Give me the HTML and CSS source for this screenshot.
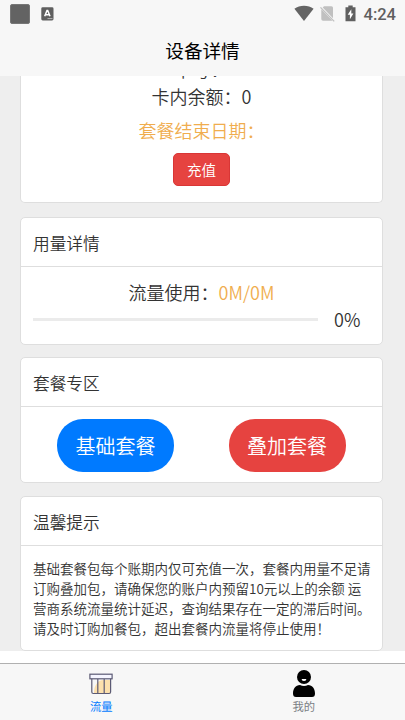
FILE: index.html
```
<!DOCTYPE html>
<html lang="zh-CN">
<head>
<meta charset="utf-8">
<title>设备详情</title>
<link rel="stylesheet" href="styles.css">
</head>
<body>
<header class="top">
  <div class="status">
    <span class="square"></span>
    <svg class="lang" width="13" height="14" viewBox="0 0 13 14"><rect x=".3" y=".3" width="12.2" height="13.2" rx="1.4" fill="#5f5f5f"/><path d="M3.7 9.3 6 3.5h.7L9 9.3M4.6 7.8h3.5" fill="none" stroke="#fff" stroke-width="1.5"/><path d="M6.5 11.6h5" stroke="#ccc" stroke-width=".8"/></svg>
    <svg class="wifi" width="20" height="17" viewBox="0 0 20 17"><path d="M.4 3.8C5.600-.2 14.400-.2 19.600 3.800L10 16Z" fill="#646464"/></svg>
    <svg class="sim" width="15" height="17" viewBox="0 0 15 17"><path d="M4 1.300h7.500q1.500 0 1.500 1.500v10.500L2.700 2.500ZM1.300 4.300 12.500 15.700H3q-1.700 0-1.700-1.700Z" fill="#c0c0c0"/><path d="m.5 2.400 13.700 14" stroke="#c0c0c0" stroke-width="1.300"/></svg>
    <svg class="battery" width="11" height="17" viewBox="0 0 11 17"><path d="M3.300.4h4.400v1.900H10.500v14H.5v-14h2.800Z" fill="#606060"/><path d="M6.300 4.300 2.700 9.800h2.200v4.400l3.500-5.700H6.300Z" fill="#fff"/></svg>
    <span class="clock">4:24</span>
  </div>
  <h1>设备详情</h1>
</header>
<main>
  <section class="card account">
    <p>卡号：</p>
    <p>卡内余额：0</p>
    <p class="expiry">套餐结束日期：</p>
    <button class="recharge">充值</button>
  </section>
  <section class="card usage">
    <h2>用量详情</h2>
    <p class="flow">流量使用：<span>0M/0M</span></p>
    <div class="progress"><div class="track"></div><span>0%</span></div>
  </section>
  <section class="card plans">
    <h2>套餐专区</h2>
    <div class="buttons"><button class="basic">基础套餐</button><button class="extra">叠加套餐</button></div>
  </section>
  <section class="card tips">
    <h2>温馨提示</h2>
    <p>基础套餐包每个账期内仅可充值一次，套餐内用量不足请<br>订购叠加包，请确保您的账户内预留10元以上的余额 运<br>营商系统流量统计延迟，查询结果存在一定的滞后时间。<br>请及时订购加餐包，超出套餐内流量将停止使用！</p>
  </section>
</main>
<nav>
  <a class="active">
    <svg width="26" height="28" viewBox="0 0 26 28"><path d="M6 23.500C5.500 16 10 10 15 10h7.500v13.500Z" fill="#fce0ad"/><g fill="none" stroke="#5c5b75" stroke-width="1.200"><rect x="1.900" y="4.200" width="22.200" height="4.600" fill="#f5f5ff"/><path d="M3.800 8.800V22q0 1.500 1.500 1.500h15.800q1.500 0 1.500-1.500V8.800M9.800 9v14.500M16.200 9v14.500"/></g></svg>
    <span>流量</span>
  </a>
  <a>
    <svg width="26" height="28" viewBox="0 0 26 28"><circle cx="13" cy="7" r="7"/><path d="M10.600 9h4.800a2.400 2 0 0 1-4.800 0Z" fill="#fff"/><path d="M9 15q4 1.800 8 0c4.500 0 7 4 7 8.500 0 2.500-1 3.500-3 3.500H5c-2 0-3-1-3-3.500C2 19 4.500 15 9 15Z"/></svg>
    <span>我的</span>
  </a>
</nav>
</body>
</html>
```
FILE: styles.css
```
* { box-sizing: border-box; margin: 0; padding: 0; }
body {
  width: 405px; height: 720px; overflow: hidden;
  display: flex; flex-direction: column;
  background: #fff; color: #333;
  font-family: "Noto Sans CJK SC", sans-serif;
  font-weight: 350;
}
h1, h2 { font-weight: 350; }
button { border: 0; font-family: inherit; font-weight: 350; color: #fff; }
.top { height: 76px; flex: none; background: #f7f7f7; }
.status { height: 27px; display: flex; align-items: center; padding: 0 9px 0 10px; }
.square { width: 20px; height: 20px; background: #636363; border: 1px solid #777; border-radius: 2px; }
.lang { margin-left: 11px; }
.wifi { margin-left: auto; margin-right: 6px; }
.sim { margin-right: 10px; }
.battery { margin-right: 8px; }
.clock { font: 500 16.5px/27px Roboto, sans-serif; color: #5f5f5f; padding-top: 1px; }
h1 { color: #000; font-size: 18.6px; font-weight: 400; line-height: 46px; text-align: center; }
main {
  height: 575px; flex: none; overflow: hidden; background: #eee;
  padding: 0 22px 0 20px;
  display: flex; flex-direction: column; justify-content: flex-end; gap: 13px;
}
.card { flex: none; background: #fff; border: 1px solid #dedede; border-radius: 5px; }
.card h2 { height: 49px; padding-left: 12px; border-bottom: 1px solid #dedede; font-size: 16.7px; line-height: 50px; }
.account { height: 141px; text-align: center; font-size: 18px; line-height: 27px; margin-bottom: 1px; border-top: 0; border-radius: 0 0 5px 5px; }
.account p:first-child { margin-top: -6px; }
.account .expiry { color: #f0ad4e; margin-top: 7px; }
.recharge { width: 57px; height: 33px; margin-top: 9px; display: block; margin-left: 152px; border: 1px solid #d93636; border-radius: 5px; background: #e64340; font-size: 14.6px; line-height: 31px; }
.usage { height: 128px; margin-bottom: -1px; }
.flow { font-size: 18px; line-height: 27px; text-align: center; padding-top: 12px; }
.flow span { color: #f0ad4e; }
.progress { display: flex; align-items: center; height: 27px; padding-left: 12px; font-size: 18px; }
.progress span { margin-top: -2px; }
.track { width: 285px; height: 3px; background: #ebebeb; margin-right: 16px; }
.plans { height: 126px; }
.buttons { display: flex; justify-content: space-between; padding: 12px 36.5px 0 36px; }
.buttons button { width: 117px; height: 52.5px; border-radius: 26px; font-size: 20px; line-height: 54px; }
.basic { background: #007aff; }
.extra { background: #e64340; }
.tips { height: 155px; }
.tips p { padding: 11.5px 0 0 12px; font-size: 13.5px; line-height: 20.25px; white-space: nowrap; }
nav { height: 57px; margin-top: 12px; flex: none; display: flex; background: #f7f7f7; border-top: 1px solid #b0b0b0; }
nav a { flex: 1; display: flex; flex-direction: column; align-items: center; padding-top: 5.5px; color: #7a7e83; font-size: 11.3px; font-weight: 400; line-height: 17px; }
nav svg { flex: none; }
nav .active { color: #007aff; }
```
